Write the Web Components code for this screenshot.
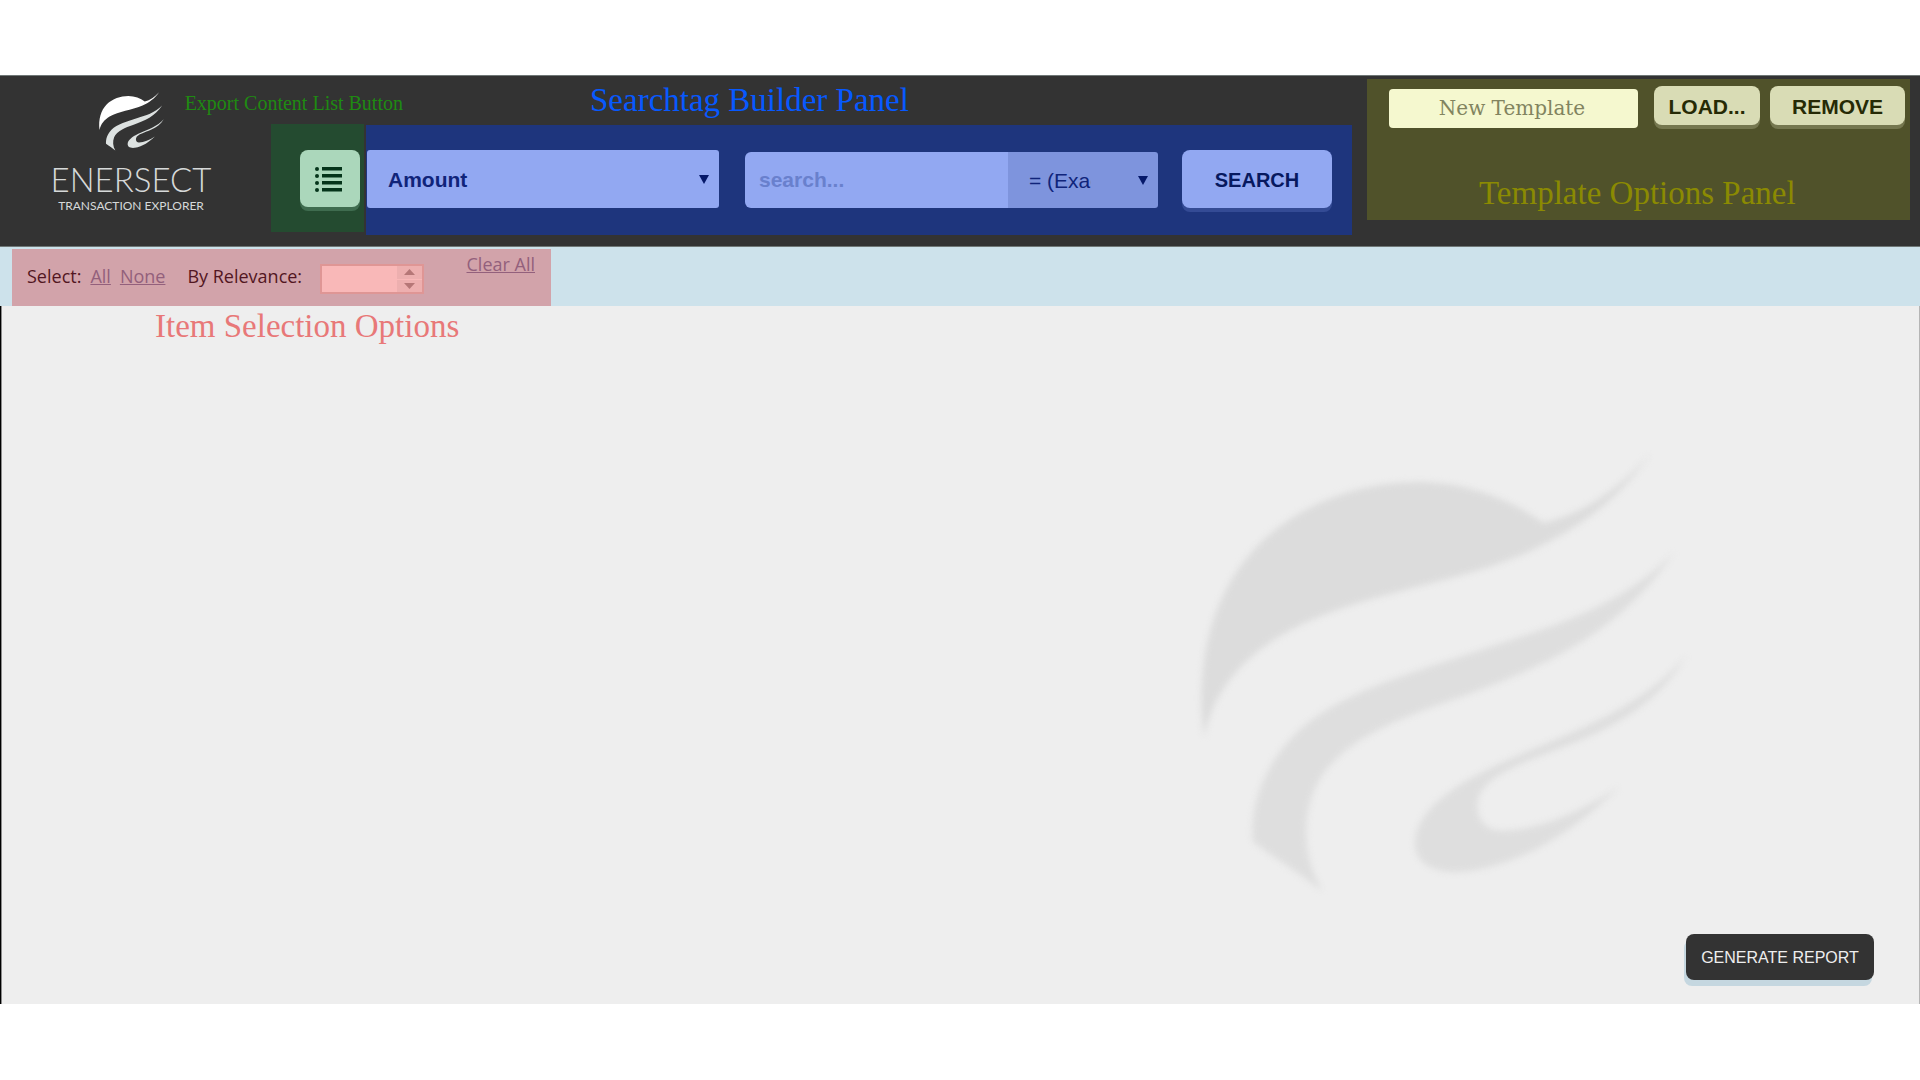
<!DOCTYPE html>
<html lang="en">
<head>
<meta charset="utf-8">
<title>Enersect Transaction Explorer</title>
<style>
  body { margin: 0; background: #fff; font-family: "Liberation Sans", sans-serif; }
</style>
</head>
<body>
<enersect-app></enersect-app>

<script>
  const define = (name, html, setup) => {
    const template = document.createElement('template');
    template.innerHTML = html;
    customElements.define(name, class extends HTMLElement {
      constructor() {
        super();
        this.attachShadow({ mode: 'open' }).append(template.content.cloneNode(true));
        if (setup) setup(this);
      }
    });
  };

  /* The wave mark, shared by the header logo and the page watermark */
  define('wave-mark', `
    <style>
      :host { display: block; }
      svg { display: block; width: 100%; height: auto; overflow: visible; }
      .sun { fill: var(--sun, #fff); }
      .wave { fill: var(--wave, #dde2e1); }
    </style>
    <svg viewBox="20 22 490 444" aria-hidden="true">
      <path class="sun" d="M24 308C14 230 34 160 79 115C122 72 182 52 241 52C290 53 332 70 365 93C405 84 440 60 473 23C440 70 400 100 344 125C265 158 170 165 100 207C60 232 34 262 24 308Z"/>
      <path class="wave" d="M496 123C440 180 370 198 310 218C235 243 155 264 114 307C82 340 70 380 73 413C98 432 120 445 143 463C124 430 122 395 134 363C155 312 220 290 276 270C370 236 440 205 496 123Z"/>
      <path class="wave" d="M508 227C460 282 390 304 334 329C285 350 245 375 237 405C230 435 255 447 290 443C350 434 400 398 441 358C400 385 355 403 320 402C300 400 296 382 300 368C310 340 370 327 412 307C455 287 485 265 508 227Z"/>
    </svg>`);

  define('brand-logo', `
    <style>
      :host { display: flex; flex-direction: column; align-items: center; color: #d6d9d9; font-family: Lato, sans-serif; }
      wave-mark { width: 65px; }
      .name { font-size: 33px; line-height: 40px; font-weight: 300; margin-top: 8px; }
      .sub { font-size: 12px; line-height: 14px; }
    </style>
    <wave-mark></wave-mark>
    <div class="name">ENERSECT</div>
    <div class="sub">TRANSACTION EXPLORER</div>`);

  define('panel-caption', `
    <style>
      :host { display: block; font-family: "Liberation Serif", serif; font-size: 33px; line-height: 40px; white-space: nowrap; }
      :host([small]) { font-size: 20px; line-height: 24px; }
    </style>
    <slot></slot>`);

  define('push-button', `
    <style>
      :host { display: block; }
      button {
        display: flex; align-items: center; justify-content: center; box-sizing: border-box;
        width: 100%; height: 100%; margin: 0; padding: 2px 0 0; border: 0; border-radius: 8px;
        background: var(--face); color: var(--ink); box-shadow: var(--drop-x, 0) var(--drop-y, 4px) 0 var(--edge);
        font: inherit; white-space: nowrap;
      }
    </style>
    <button type="button"><slot></slot></button>`,
    host => {
      const label = host.getAttribute('label');
      if (label) host.shadowRoot.querySelector('button').setAttribute('aria-label', label);
    });

  define('export-panel', `
    <style>
      :host { display: block; position: relative; }
      .area { display: flex; box-sizing: border-box; width: 93px; height: 108px; padding: 26px 4px 25px 29px; background: #244b30; }
      push-button { flex: 1; --face: #abd7bb; --edge: #3f6c4f; }
      svg { display: block; width: 27px; height: 25px; padding-right: 3px; fill: #05341a; }
      panel-caption { position: absolute; right: -39px; top: -33px; color: #1f8a12; }
    </style>
    <panel-caption small>Export Content List Button</panel-caption>
    <div class="area">
      <push-button label="Export content list">
        <svg viewBox="0 0 27 25" aria-hidden="true">
          <rect y="0" width="4" height="4" rx="2"/><rect x="7" y="0" width="20" height="3.500"/>
          <rect y="7" width="4" height="4" rx="2"/><rect x="7" y="7" width="20" height="3.500"/>
          <rect y="14" width="4" height="4" rx="2"/><rect x="7" y="14" width="20" height="3.500"/>
          <rect y="21" width="4" height="4" rx="2"/><rect x="7" y="21" width="20" height="3.500"/>
        </svg>
      </push-button>
    </div>`);

  define('pick-list', `
    <style>
      :host { display: grid; align-items: center; }
      select, svg { grid-area: 1 / 1; }
      select {
        appearance: none; box-sizing: border-box; width: 100%; height: 100%; margin: 0; border: 0;
        padding: var(--pad, 0 40px 0 21px); border-radius: var(--round, 3px);
        background: var(--face); color: #10247a; font: inherit;
      }
      svg { justify-self: end; width: 10px; height: 9px; margin: 0 10px 0 0; fill: #06196a; pointer-events: none; }
    </style>
    <select><option></option></select>
    <svg viewBox="0 0 10 9" aria-hidden="true"><path d="M0 0H10L5 9Z"/></svg>`,
    host => {
      const select = host.shadowRoot.querySelector('select');
      select.setAttribute('aria-label', host.getAttribute('label'));
      select.options[0].textContent = host.getAttribute('value');
    });

  define('searchtag-builder', `
    <style>
      :host { display: block; }
      panel-caption { color: #0759ff; padding-left: 224px; }
      .area {
        display: flex; box-sizing: border-box; height: 110px; margin-top: 5px; padding: 25px 20px 27px 1px;
        background: #1e357d; font-size: 21px; font-weight: bold;
      }
      .field { flex: 352; --face: #92a8f2; }
      .query { flex: 413; display: flex; margin: 2px 24px 0 26px; min-width: 0; }
      input {
        flex: 1; min-width: 0; box-sizing: border-box; margin: 0; border: 0; padding: 0 14px;
        border-radius: 6px 0 0 6px; background: #92a8f2; color: #10247a; font: inherit;
      }
      input::placeholder { color: #6980cd; opacity: 1; }
      .match { width: 150px; font-weight: normal; --face: #7e94dd; --pad: 0 67px 0 21px; --round: 0 3px 3px 0; }
      push-button { flex: 150; font-size: 20px; --face: #92a8f2; --edge: #344b95; --ink: #07195f; }
    </style>
    <panel-caption>Searchtag Builder Panel</panel-caption>
    <div class="area">
      <pick-list class="field" label="Search field" value="Amount"></pick-list>
      <div class="query">
        <input type="text" placeholder="search..." aria-label="Search text">
        <pick-list class="match" label="Match mode" value="= (Exact)"></pick-list>
      </div>
      <push-button>SEARCH</push-button>
    </div>`);

  define('template-options', `
    <style>
      :host { display: flex; flex-direction: column; box-sizing: border-box; padding: 7px 5px 0 22px; background: #50522a; }
      .row { display: flex; align-items: flex-start; height: 43px; font-size: 21px; font-weight: bold; }
      input {
        flex: 1; min-width: 0; box-sizing: border-box; height: 39px; margin: 3px 16px 0 0; padding: 0 3px 2px 0; border: 0; border-radius: 4px;
        background: #f5f8cf; text-align: center; font: 20px "DejaVu Serif", serif;
      }
      input::placeholder { color: #82845f; opacity: 1; }
      push-button { height: 39px; --face: #d9dcb5; --edge: #75774f; --ink: #262a05; }
      .load { width: 106px; margin-right: 10px; }
      .remove { width: 135px; }
      panel-caption { color: #8b8a02; padding-left: 90px; margin-top: 44px; }
    </style>
    <div class="row">
      <input type="text" placeholder="New Template" aria-label="Template name">
      <push-button class="load">LOAD...</push-button>
      <push-button class="remove">REMOVE</push-button>
    </div>
    <panel-caption>Template Options Panel</panel-caption>`);

  define('app-header', `
    <style>
      :host { display: flex; align-items: flex-start; box-sizing: border-box; height: 172px; border: solid #6f7776; border-width: 1px 0; background: #333; }
      brand-logo { width: 262px; margin: 16px 9px 0 0; }
      export-panel { margin: 48px 2px 0 0; }
      searchtag-builder { flex: 1; min-width: 0; margin: 4px 15px 0 0; }
      template-options { width: 543px; height: 141px; margin: 3px 10px 0 0; }
    </style>
    <brand-logo></brand-logo>
    <export-panel></export-panel>
    <searchtag-builder></searchtag-builder>
    <template-options></template-options>`);

  define('number-stepper', `
    <style>
      :host { display: flex; box-sizing: border-box; width: 104px; height: 30px; border: 2px solid #df9695; background: #f9b8b8; }
      input { flex: 1; min-width: 0; margin: 0; border: 0; padding: 0 4px; background: none; font: inherit; appearance: textfield; }
      input::-webkit-inner-spin-button { appearance: none; margin: 0; }
      .steps { display: grid; grid-template-rows: 1fr 1fr; gap: 1px; width: 25px; }
      button { display: flex; align-items: center; justify-content: center; margin: 0; padding: 0; border: 0; background: #edafaf; }
      svg { width: 11px; height: 6px; fill: #b67777; }
    </style>
    <input type="number" id="relevance" aria-label="By Relevance">
    <div class="steps">
      <button type="button" aria-label="Increase"><svg viewBox="0 0 11 6"><path d="M0 6L5.500 0L11 6Z"/></svg></button>
      <button type="button" aria-label="Decrease"><svg viewBox="0 0 11 6"><path d="M0 0H11L5.500 6Z"/></svg></button>
    </div>`,
    host => host.addEventListener('click', e => {
      const step = e.composedPath().find(n => n.localName === 'button');
      if (!step) return;
      const input = host.shadowRoot.querySelector('input');
      step.getAttribute('aria-label') === 'Increase' ? input.stepUp() : input.stepDown();
    }));

  define('selection-bar', `
    <style>
      :host { display: flex; box-sizing: border-box; height: 59px; padding: 2px 0 0 12px; background: #cde2eb; }
      .area {
        display: flex; align-items: center; box-sizing: border-box; width: 539px; padding: 0 16px 3px 15px;
        background: #d2a3aa; color: #521622; font: 18px/24px "Open Sans", sans-serif; white-space: nowrap;
      }
      a { color: #93607c; margin-left: 9px; text-decoration: underline; }
      label { margin: 0 18px 0 22px; }
      number-stepper { margin-top: 6px; }
      .clear { align-self: flex-start; margin: 3px 0 0 auto; }
    </style>
    <div class="area">
      <span>Select:</span>
      <a href="#all">All</a>
      <a href="#none">None</a>
      <label>By Relevance:</label>
      <number-stepper></number-stepper>
      <a class="clear" href="#clear">Clear All</a>
    </div>`,
    host => host.shadowRoot.querySelector('label').addEventListener('click', () =>
      host.shadowRoot.querySelector('number-stepper').shadowRoot.querySelector('input').focus()));

  define('report-canvas', `
    <style>
      :host {
        display: flex; flex-direction: column; align-items: flex-end; box-sizing: border-box;
        padding-bottom: 24px; border-left: 1px solid #000; border-right: 1px solid #b5b5b5; background: #eee;
        box-shadow: inset 1px 0 #8c8c8c;
      }
      panel-caption { align-self: flex-start; padding-left: 154px; color: #e87878; }
      wave-mark { width: 488px; margin: 106px 231px 0 0; filter: blur(3px); --sun: #dcdcdc; --wave: #dedede; }
      push-button { width: 188px; height: 46px; margin: 40px 45px 0 0; font-size: 16px;
        --face: #333; --ink: #eee; --edge: #c5d7e0; --drop-x: -2px; --drop-y: 6px; }
    </style>
    <panel-caption>Item Selection Options</panel-caption>
    <wave-mark></wave-mark>
    <push-button>GENERATE REPORT</push-button>`);

  define('enersect-app', `
    <style>
      :host { display: block; padding: 75px 0 76px; }
    </style>
    <app-header></app-header>
    <selection-bar></selection-bar>
    <report-canvas></report-canvas>`);
</script>
</body>
</html>
